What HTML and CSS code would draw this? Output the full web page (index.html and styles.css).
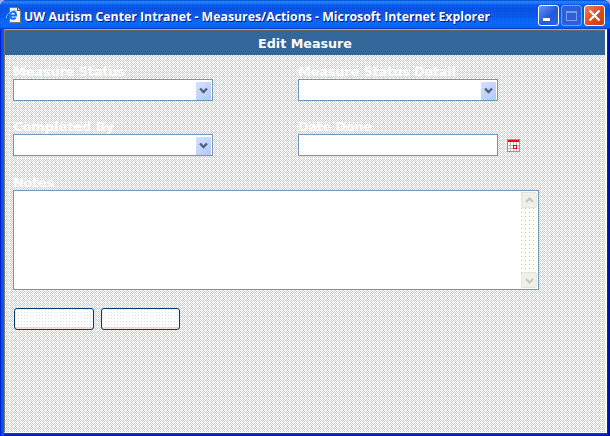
FILE: index.html
```html
<!DOCTYPE html>
<html lang="en">
<head>
<meta charset="utf-8">
<title>UW Autism Center Intranet - Measures/Actions</title>
<link rel="stylesheet" href="styles.css">
</head>
<body>
<div class="window">
  <header class="titlebar">
    <svg class="page-icon" width="16" height="16" viewBox="0 0 16 16">
      <path d="M3.5.5h8l3 3v12h-11z" fill="#f4f4ee" stroke="#777"/>
      <path d="M11.5.5v3h3" fill="#ccc" stroke="#555"/>
      <path d="M4 8.500h6c0-5-6-5-6 0 0 4 4.500 4 5.500 2" fill="none" stroke="#0874e8" stroke-width="2"/>
      <path d="M.5 11C-1 8 8 1 11 4" fill="none" stroke="#9cc4e4"/>
    </svg>
    <svg class="title" width="480" height="24"><text class="title-shadow" x="1" y="18" textLength="466" lengthAdjust="spacingAndGlyphs">UW Autism Center Intranet - Measures/Actions - Microsoft Internet Explorer</text><text class="title-text" x="0" y="17" textLength="466" lengthAdjust="spacingAndGlyphs">UW Autism Center Intranet - Measures/Actions - Microsoft Internet Explorer</text></svg>
    <div class="controls">
      <span class="control"><svg width="19" height="19"><path d="M4 12h7v3H4z" fill="#fff"/></svg></span>
      <span class="control maximize"><svg width="19" height="19" shape-rendering="crispEdges"><path d="M4.500 5.500h10v9h-10zM4 6.500h11" fill="none" stroke="#789bf0"/></svg></span>
      <span class="control close"><svg width="19" height="19"><path d="M4.500 4.500l10 10m0-10l-10 10" stroke="#fff" stroke-width="2.200"/></svg></span>
    </div>
  </header>
  <main class="content">
    <h1 class="heading"><svg width="110" height="25"><text x="8" y="18" textLength="94" lengthAdjust="spacingAndGlyphs">Edit Measure</text></svg></h1>
    <form class="form">
      <div class="fields">
        <div class="field"><svg class="label" width="200" height="16"><text x="0" y="13" textLength="112">Measure Status</text></svg><div class="input"><span class="arrow"><svg width="15" height="18"><path d="M4 6.500l3.500 3.500L11 6.500" fill="none" stroke="#4d6185" stroke-width="2.400"/></svg></span></div></div>
        <div class="field"><svg class="label" width="200" height="16"><text x="0" y="13" textLength="158">Measure Status Detail</text></svg><div class="input"><span class="arrow"><svg width="15" height="18"><path d="M4 6.500l3.500 3.500L11 6.500" fill="none" stroke="#4d6185" stroke-width="2.400"/></svg></span></div></div>
        <div class="field"><svg class="label" width="200" height="16"><text x="0" y="13" textLength="101">Completed By</text></svg><div class="input"><span class="arrow"><svg width="15" height="18"><path d="M4 6.500l3.500 3.500L11 6.500" fill="none" stroke="#4d6185" stroke-width="2.400"/></svg></span></div></div>
        <div class="field"><svg class="label" width="200" height="16"><text x="0" y="13" textLength="74">Date Done</text></svg><div class="date-row"><div class="input"></div>
          <svg class="calendar" width="13" height="13" shape-rendering="crispEdges"><path d="M0 0h13v13H0z" fill="#999"/><path d="M1 3h11v9H1z" fill="#fff"/><path d="M3.500 3v9M6.500 3v9M9.500 3v9M1 6.500h11M1 9.500h11" stroke="#bbb"/><path d="M1 1h11v2H1z" fill="#f00"/><path d="M6.500 6.500h3v3h-3z" fill="#fff" stroke="#f00"/></svg></div></div>
      </div>
      <svg class="label" width="200" height="16"><text x="0" y="13" textLength="41">Notes</text></svg>
      <div class="notes"><div class="scrollbar">
        <span class="scroll-button"><svg width="15" height="15"><path d="M4 9l3.500-3.500L11 9" fill="none" stroke="#c6c6bb" stroke-width="2"/></svg></span>
        <span class="scroll-button"><svg width="15" height="15"><path d="M4 6l3.500 3.500L11 6" fill="none" stroke="#c6c6bb" stroke-width="2"/></svg></span>
      </div></div>
      <div class="actions"><button class="button" type="button"></button><button class="button" type="button"></button></div>
    </form>
  </main>
</div>
</body>
</html>
```
FILE: styles.css
```css
* { box-sizing: border-box; }
body { margin: 0; background: #9caeeb; }
svg { display: block; flex: none; }
.window { width: 610px; height: 436px; padding: 0 3px 3px 4px; display: flex; flex-direction: column; overflow: hidden; border-radius: 7px 7px 0 0; background: linear-gradient(90deg, #0010c8 0, #0058ee 2px, #0058ee 4px, transparent 4px, transparent 607px, #0028d0 607px, #000090 610px), linear-gradient(#0831d9 433px, #0048e0 433px, #0010a0 436px); }
.titlebar { height: 29px; flex: none; margin: 0 -3px 0 -4px; padding: 0 5px 0 6px; display: flex; background: conic-gradient(transparent 75%, rgba(0, 20, 160, .22) 0) 0 0 / 2px 2px, linear-gradient(#0050d8 0, #2890ff 2px, #0860f0 5px, #0058e8 9px, #0060f0 16px, #0070ff 22px, #006cff 27px, #003dd0 29px); }
.page-icon { margin-top: 7px; }
.title { margin: 4px 0 0 2px; }
.title text { font: bold 12px "Open Sans", sans-serif; }
.title .title-text { fill: #fff; }
.title .title-shadow { fill: #00178d; }
.controls { display: flex; gap: 2px; margin: 5px 0 0 auto; }
.control { width: 21px; height: 21px; border: 1px solid #fff; border-radius: 3px; background: linear-gradient(135deg, #6694f5, #2458dc 55%, #2864ef); }
.maximize { border-color: #7c9ef2; background: #2b60dc; }
.close { background: linear-gradient(135deg, #f08060, #e04a20 55%, #ce3a0c); }
.content { flex: 1; border-top: 1px solid #aca899; border-left: 1px solid #77776d; border-right: 2px solid #fffff0; border-bottom: 1px solid #fff; background: conic-gradient(from 270deg at 1px 1px, #fff 25%, transparent 0) 0 0 / 4px 4px, conic-gradient(#fff 25%, #ccc 0 50%, #fff 0 75%, #ccc 0) 0 0 / 2px 2px; }
.heading { height: 25px; margin: 0; display: flex; justify-content: center; border-top: 1px solid #66675f; background: #336699; }
.heading svg { margin-top: -1px; }
.heading text, .label text { font: bold 13px "DejaVu Sans", sans-serif; fill: #fff; }
.form { padding: 8px 0 0 8px; }
.fields { display: grid; grid-template-columns: 285px 230px; row-gap: 17px; }
.input { width: 200px; height: 22px; border: 1px solid #7396b9; background: #fff; padding: 2px 1px; display: flex; justify-content: flex-end; }
.arrow { width: 15px; height: 18px; border-radius: 1px; background: linear-gradient(135deg, #d4e2ff, #b4c8f5); }
.date-row { display: flex; }
.calendar { margin: 5px 0 0 9px; }
.fields + .label { margin-top: 18px; }
.notes { width: 526px; height: 100px; border: 1px solid #7396b9; background: #fff; padding: 1px; display: flex; justify-content: flex-end; }
.scrollbar { width: 16px; display: flex; flex-direction: column; justify-content: space-between; background: conic-gradient(from 270deg at 1px 1px, #ccc 25%, #fffffa 0) 0 0 / 4px 4px; }
.scroll-button { width: 16px; height: 16px; background: #f0f0eb; border: 1px solid #e5e5d9; border-radius: 2px; }
.actions { display: flex; gap: 7px; margin: 18px 0 0 1px; }
.button { width: 80px; height: 22px; padding: 0; border: 1px solid #003c74; border-radius: 3px; background: linear-gradient(transparent 18px, rgba(225, 190, 180, .5) 18px), conic-gradient(from 270deg at 1px 1px, #dcdcdc 25%, #fff 0) 0 0 / 3px 3px; }
.button + .button { width: 79px; }
```
